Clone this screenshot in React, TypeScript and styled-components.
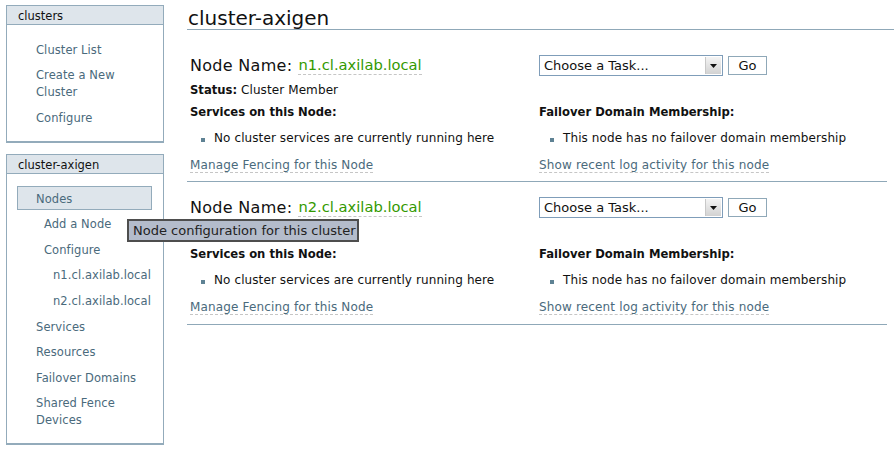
import styled, { createGlobalStyle } from 'styled-components';

const GlobalStyle = createGlobalStyle`
  body {
    margin: 0;
    background: #fff;
    font-family: 'DejaVu Sans', Verdana, sans-serif;
    color: #111;
  }
`;

const Page = styled.div`
  position: relative;
  display: flex;
  align-items: flex-start;
  width: 894px;
  height: 452px;
  overflow: hidden;
`;

const Sidebar = styled.nav`
  width: 158px;
  margin: 5px 0 0 6px;
  display: flex;
  flex-direction: column;
  gap: 11px;
  flex-shrink: 0;
`;

const Box = styled.section`
  border: 1px solid #93abbb;
  border-bottom-width: 2px;
`;

const BoxHeader = styled.div`
  height: 18px;
  line-height: 20px;
  padding-left: 11px;
  background: #dee5eb;
  border-bottom: 1px solid #93abbb;
  font-size: 11.5px;
  color: #111;
`;

const NavList = styled.ul<{ $top: number; $bottom: number }>`
  list-style: none;
  margin: 0;
  padding: ${(p) => p.$top}px 0 ${(p) => p.$bottom}px;
`;

const NavItem = styled.li<{ $indent?: number; $active?: boolean }>`
  font-size: 11.5px;
  letter-spacing: 0.08px;
  line-height: 17px;
  color: #4a6a7c;
  padding: 5.8px 8px 2.8px ${(p) => 29 + (p.$indent ?? 0)}px;

  ${(p) =>
    p.$active &&
    `
    margin: 0.8px 11px 0.8px 10px;
    padding: 4px 0 1px 18px;
    background: #dee5eb;
    border: 1px solid #93abbb;
  `}
`;

const Main = styled.main`
  margin-left: 23px;
  flex: 1;
`;

const Title = styled.h1`
  margin: 6px 0 10px;
  padding-left: 1px;
  font-size: 20px;
  font-weight: normal;
  line-height: 24px;
  height: 23px;
  color: #111;
  border-bottom: 1px solid #8fa8b8;
`;

const NodeBlock = styled.div<{ $first?: boolean }>`
  width: 697px;
  display: grid;
  grid-template-columns: 349px 1fr;
  padding: ${(p) => (p.$first ? 15 : 15)}px 0 ${(p) => (p.$first ? 7 : 8)}px 3px;
  border-bottom: 1px solid #8fa8b8;
  font-size: 12px;
  letter-spacing: 0.1px;
  line-height: 18px;
`;

const NameRow = styled.div`
  height: 21px;
  display: flex;
  align-items: center;
  font-size: 16px;
  letter-spacing: 0.3px;
`;

const NodeName = styled.span`
  margin-left: 6px;
  font-size: 14.7px;
  letter-spacing: 0;
  color: #339900;
  line-height: 18px;
  border-bottom: 1px dashed #c6c6c6;
`;

const TaskRow = styled.div`
  height: 21px;
  display: flex;
  align-items: center;
  gap: 5px;
  letter-spacing: 0;
`;

const Select = styled.div`
  box-sizing: border-box;
  width: 184px;
  height: 21px;
  border: 1px solid #7f9db9;
  display: flex;
  align-items: stretch;
  font-size: 13px;
`;

const SelectText = styled.span`
  flex: 1;
  padding-left: 4px;
  line-height: 19px;
  color: #111;
`;

const SelectArrow = styled.span`
  width: 15px;
  margin: 1px;
  background: linear-gradient(#f4f4f4, #d2d2d2);
  border-left: 1px solid #c8c8c8;
  display: flex;
  align-items: center;
  justify-content: center;
`;

const GoButton = styled.button`
  box-sizing: border-box;
  width: 39px;
  height: 19px;
  padding: 0;
  background: #fff;
  border: 1px solid #8fa8b8;
  font-family: inherit;
  font-size: 13px;
  color: #111;
`;

const Status = styled.div`
  margin-top: 5px;

  b {
    font-size: 11.6px;
    letter-spacing: 0;
  }
`;

const Heading = styled.div`
  margin-top: 4px;
  font-weight: bold;
  font-size: 11.6px;
  letter-spacing: 0;
`;

const BulletList = styled.ul`
  list-style: none;
  margin: 8px 0 0;
  padding: 0 0 0 11px;
`;

const Bullet = styled.li`
  position: relative;
  padding-left: 13px;

  &::before {
    content: '';
    position: absolute;
    left: 0;
    top: 8.5px;
    width: 4px;
    height: 4px;
    background: #5e8294;
  }
`;

const LinkCell = styled.div`
  margin-top: 9px;
`;

const DashedLink = styled.a`
  color: #4a6a7c;
  letter-spacing: 0.15px;
  text-decoration: none;
  border-bottom: 1px dashed #c6c6c6;
`;

const Tooltip = styled.div`
  position: absolute;
  left: 127px;
  top: 219px;
  box-sizing: border-box;
  width: 232px;
  height: 23px;
  padding: 0 4px;
  background: #b4bccb;
  border: 2px solid #4e4e4e;
  font-size: 13px;
  line-height: 20px;
  color: #222;
  white-space: nowrap;
`;

const nodes = ['n1.cl.axilab.local', 'n2.cl.axilab.local'];

const Node = ({ name, first }: { name: string; first?: boolean }) => (
  <NodeBlock $first={first}>
    <NameRow>
      Node Name:<NodeName>{name}</NodeName>
    </NameRow>
    <TaskRow>
      <Select>
        <SelectText>Choose a Task...</SelectText>
        <SelectArrow>
          <svg width="7" height="4" viewBox="0 0 7 4">
            <path d="M0 0h7L3.5 4z" fill="#111" />
          </svg>
        </SelectArrow>
      </Select>
      <GoButton>Go</GoButton>
    </TaskRow>
    <Status>
      <b>Status:</b> Cluster Member
    </Status>
    <div />
    <Heading>Services on this Node:</Heading>
    <Heading>Failover Domain Membership:</Heading>
    <BulletList>
      <Bullet>No cluster services are currently running here</Bullet>
    </BulletList>
    <BulletList>
      <Bullet>This node has no failover domain membership</Bullet>
    </BulletList>
    <LinkCell>
      <DashedLink href="#">Manage Fencing for this Node</DashedLink>
    </LinkCell>
    <LinkCell>
      <DashedLink href="#">Show recent log activity for this node</DashedLink>
    </LinkCell>
  </NodeBlock>
);

export default function App() {
  return (
    <Page>
      <GlobalStyle />
      <Sidebar>
        <Box>
          <BoxHeader>clusters</BoxHeader>
          <NavList $top={11} $bottom={11}>
            <NavItem>Cluster List</NavItem>
            <NavItem>
              Create a New
              <br />
              Cluster
            </NavItem>
            <NavItem>Configure</NavItem>
          </NavList>
        </Box>
        <Box>
          <BoxHeader>cluster-axigen</BoxHeader>
          <NavList $top={11} $bottom={11}>
            <NavItem $active>Nodes</NavItem>
            <NavItem $indent={8}>Add a Node</NavItem>
            <NavItem $indent={8}>Configure</NavItem>
            {nodes.map((n) => (
              <NavItem key={n} $indent={17}>
                {n}
              </NavItem>
            ))}
            <NavItem>Services</NavItem>
            <NavItem>Resources</NavItem>
            <NavItem>Failover Domains</NavItem>
            <NavItem>
              Shared Fence
              <br />
              Devices
            </NavItem>
          </NavList>
        </Box>
      </Sidebar>
      <Main>
        <Title>cluster-axigen</Title>
        {nodes.map((n, i) => (
          <Node key={n} name={n} first={i === 0} />
        ))}
      </Main>
      <Tooltip>Node configuration for this cluster</Tooltip>
    </Page>
  );
}
